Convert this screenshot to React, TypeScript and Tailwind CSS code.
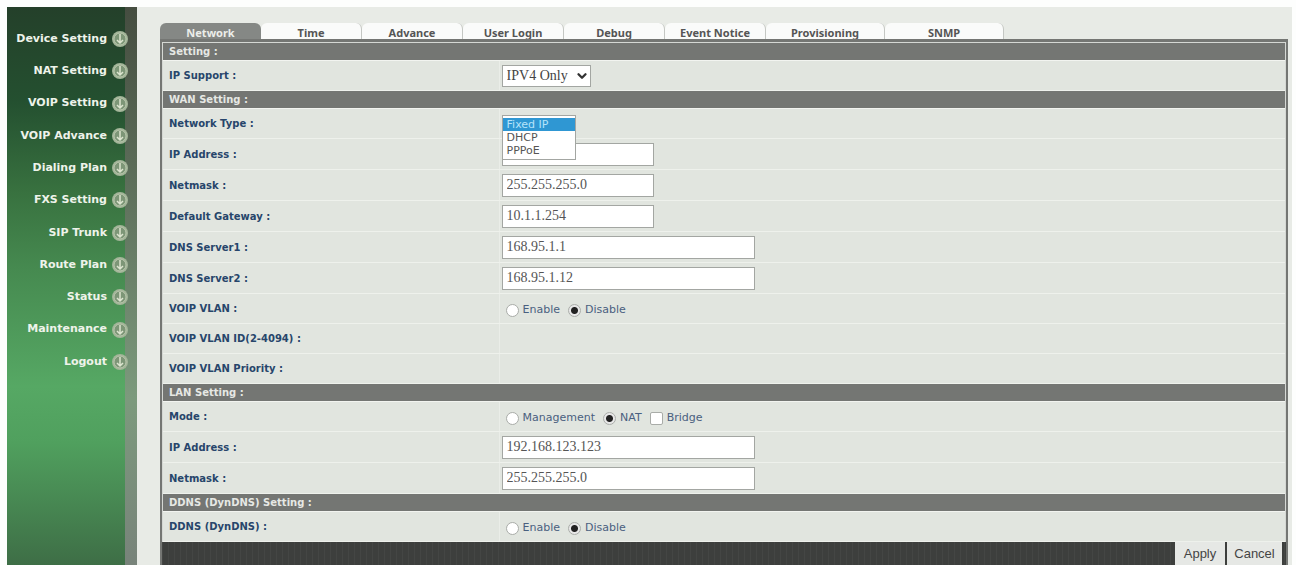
import { useState, type ReactNode } from 'react'
import { ChevronDown } from 'lucide-react'

const MENU = [
  'Device Setting',
  'NAT Setting',
  'VOIP Setting',
  'VOIP Advance',
  'Dialing Plan',
  'FXS Setting',
  'SIP Trunk',
  'Route Plan',
  'Status',
  'Maintenance',
  'Logout',
]

const TABS = ['Network', 'Time', 'Advance', 'User Login', 'Debug', 'Event Notice', 'Provisioning', 'SNMP']

function MenuIcon() {
  return (
    <svg viewBox="0 0 18 18" className="size-[18px] shrink-0" aria-hidden="true">
      <circle cx="9" cy="9" r="8" fill="#a3b599" />
      <circle cx="9" cy="9" r="6" fill="#7d9677" stroke="#b9c6ac" strokeWidth="1" />
      <path d="M9 4v9M6 10l3 3 3-3" fill="none" stroke="#dde5d0" strokeWidth="1.5" />
    </svg>
  )
}

function Sidebar() {
  return (
    <aside className="flex w-[130px] shrink-0 bg-[linear-gradient(#24402a,#245030_17%,#38713f_33%,#468a50_47%,#56a864_68%,#50a05e_78%,#3e6e46)]">
      <nav className="z-10 -mr-1 flex-1 pt-4">
        <ul className="grid h-[355px] auto-rows-fr">
          {MENU.map((item) => (
            <li key={item} className="flex items-center">
              <a href="#" className="flex w-full items-center justify-end gap-1 text-[11px] font-bold text-[#eef3ea]">
                {item}
                <MenuIcon />
              </a>
            </li>
          ))}
        </ul>
      </nav>
      <div className="w-3 bg-linear-to-b from-[#454d40] via-[#7c9a7d] via-70% to-[#78837a]" />
    </aside>
  )
}

function SectionTitle({ children }: { children: ReactNode }) {
  return (
    <h2 className="flex h-[18px] items-center border-b border-[#f2f4f0] bg-[#747673] px-[6px] text-[10px] font-bold text-[#e6e8e4]">
      {children}
    </h2>
  )
}

interface RowProps {
  label: string
  htmlFor?: string
  tall?: boolean
  children?: ReactNode
}

function Row({ label, htmlFor, tall, children }: RowProps) {
  return (
    <div className={`flex border-b border-[#eef1ec] bg-[#e1e5df] ${tall ? 'h-[31px]' : 'h-[30px]'}`}>
      <label
        htmlFor={htmlFor}
        className="flex w-[30%] shrink-0 items-center border-r border-[#eaede8] px-[6px] text-[10px] font-bold text-[#27456b]"
      >
        {label}
      </label>
      <div className="relative flex flex-1 items-center pl-[2px]">{children}</div>
    </div>
  )
}

function TextBox({ id, value = '', wide }: { id: string; value?: string; wide?: boolean }) {
  return (
    <input
      id={id}
      type="text"
      defaultValue={value}
      className={`h-[23px] border border-[#a3a6a2] bg-white px-1 font-['Liberation_Serif',serif] text-sm text-[#555] ${
        wide ? 'w-[253px]' : 'w-[152px]'
      }`}
    />
  )
}

interface ChoiceProps {
  name: string
  label: string
  type?: 'radio' | 'checkbox'
  checked?: boolean
}

function Choice({ name, label, type = 'radio', checked }: ChoiceProps) {
  return (
    <label className="flex items-center gap-1 text-[11px] text-[#4a6080]">
      <input
        type={type}
        name={name}
        defaultChecked={checked}
        className={`size-[13px] appearance-none border border-[#a9aca8] bg-white ${
          type === 'radio'
            ? 'rounded-full checked:bg-[radial-gradient(circle,#222_0_3px,#e8e8e8_4px)]'
            : 'rounded-xs checked:bg-[#444]'
        }`}
      />
      {label}
    </label>
  )
}

function Choices({ children }: { children: ReactNode }) {
  return <div className="flex items-center gap-2 pt-1 pl-1">{children}</div>
}

export default function App() {
  const [tab, setTab] = useState('Network')

  return (
    <div className="flex min-h-screen bg-[#fdfefd] pt-[7px] pr-1 pl-[7px] font-['DejaVu_Sans',Verdana,sans-serif]">
      <Sidebar />
      <main className="flex min-w-0 flex-1 flex-col bg-[#e8ebe6] pt-4 pr-1 pl-[23px]">
        <div role="tablist" className="flex h-4">
          {TABS.map((name) => (
            <button
              key={name}
              type="button"
              role="tab"
              aria-selected={tab === name}
              onClick={() => setTab(name)}
              className={`w-[101px] rounded-t-md pt-1 font-['Noto_Sans',sans-serif] text-[11px] leading-3 font-bold nth-last-[-n+2]:w-[119px] ${
                tab === name ? 'bg-[#858885] text-[#eceeea]' : 'border-r border-[#c4c7c3] bg-[#fafbfa] text-[#555]'
              }`}
            >
              {name}
            </button>
          ))}
        </div>

        <form className="flex flex-1 flex-col border-x-2 border-t-3 border-[#747673]" onSubmit={(e) => e.preventDefault()}>
          <div className="border-x border-t border-[#d5d8d4]">
            <SectionTitle>Setting :</SectionTitle>
            <Row label="IP Support :" htmlFor="ip-support">
              <select
                id="ip-support"
                className="h-[22px] w-[89px] appearance-none border border-[#a3a6a2] bg-white px-1 font-['Liberation_Serif',serif] text-sm leading-5 text-[#444]"
              >
                <option>IPV4 Only</option>
              </select>
              <ChevronDown className="pointer-events-none -ml-4 size-[14px] text-[#333]" strokeWidth={4} />
            </Row>

            <SectionTitle>WAN Setting :</SectionTitle>
            <Row label="Network Type :" htmlFor="network-type">
              <select
                id="network-type"
                size={3}
                defaultValue="Fixed IP"
                className="absolute top-[6px] left-[2px] z-10 h-[45px] w-[74px] overflow-hidden border border-[#a3a6a2] bg-white pt-[2px] text-[11px] text-[#555]"
              >
                {['Fixed IP', 'DHCP', 'PPPoE'].map((type) => (
                  <option
                    key={type}
                    className="h-[13px] min-h-0 px-1 py-0 leading-3 checked:bg-linear-to-b checked:from-[#2f97d3] checked:to-[#2f97d3] checked:text-[#b5e3fa]"
                  >
                    {type}
                  </option>
                ))}
              </select>
            </Row>
            <Row label="IP Address :" htmlFor="wan-ip" tall>
              <TextBox id="wan-ip" />
            </Row>
            <Row label="Netmask :" htmlFor="wan-mask" tall>
              <TextBox id="wan-mask" value="255.255.255.0" />
            </Row>
            <Row label="Default Gateway :" htmlFor="gateway" tall>
              <TextBox id="gateway" value="10.1.1.254" />
            </Row>
            <Row label="DNS Server1 :" htmlFor="dns1" tall>
              <TextBox id="dns1" value="168.95.1.1" wide />
            </Row>
            <Row label="DNS Server2 :" htmlFor="dns2" tall>
              <TextBox id="dns2" value="168.95.1.12" wide />
            </Row>
            <Row label="VOIP VLAN :">
              <Choices>
                <Choice name="vlan" label="Enable" />
                <Choice name="vlan" label="Disable" checked />
              </Choices>
            </Row>
            <Row label="VOIP VLAN ID(2-4094) :" />
            <Row label="VOIP VLAN Priority :" />

            <SectionTitle>LAN Setting :</SectionTitle>
            <Row label="Mode :">
              <Choices>
                <Choice name="mode" label="Management" />
                <Choice name="mode" label="NAT" checked />
                <Choice name="bridge" label="Bridge" type="checkbox" />
              </Choices>
            </Row>
            <Row label="IP Address :" htmlFor="lan-ip" tall>
              <TextBox id="lan-ip" value="192.168.123.123" wide />
            </Row>
            <Row label="Netmask :" htmlFor="lan-mask" tall>
              <TextBox id="lan-mask" value="255.255.255.0" wide />
            </Row>

            <SectionTitle>DDNS (DynDNS) Setting :</SectionTitle>
            <Row label="DDNS (DynDNS) :">
              <Choices>
                <Choice name="ddns" label="Enable" />
                <Choice name="ddns" label="Disable" checked />
              </Choices>
            </Row>
          </div>

          <div className="flex flex-1 justify-end gap-[2px] bg-[#3d3f3d] bg-[repeating-linear-gradient(90deg,#444644_0_1px,transparent_1px_6px)] pr-1 font-['Liberation_Sans',sans-serif] text-[13px] text-[#444]">
            <button type="submit" className="w-[50px] bg-[#e6e8e5]">
              Apply
            </button>
            <button type="reset" className="w-[55px] bg-[#e6e8e5]">
              Cancel
            </button>
          </div>
        </form>
      </main>
    </div>
  )
}
